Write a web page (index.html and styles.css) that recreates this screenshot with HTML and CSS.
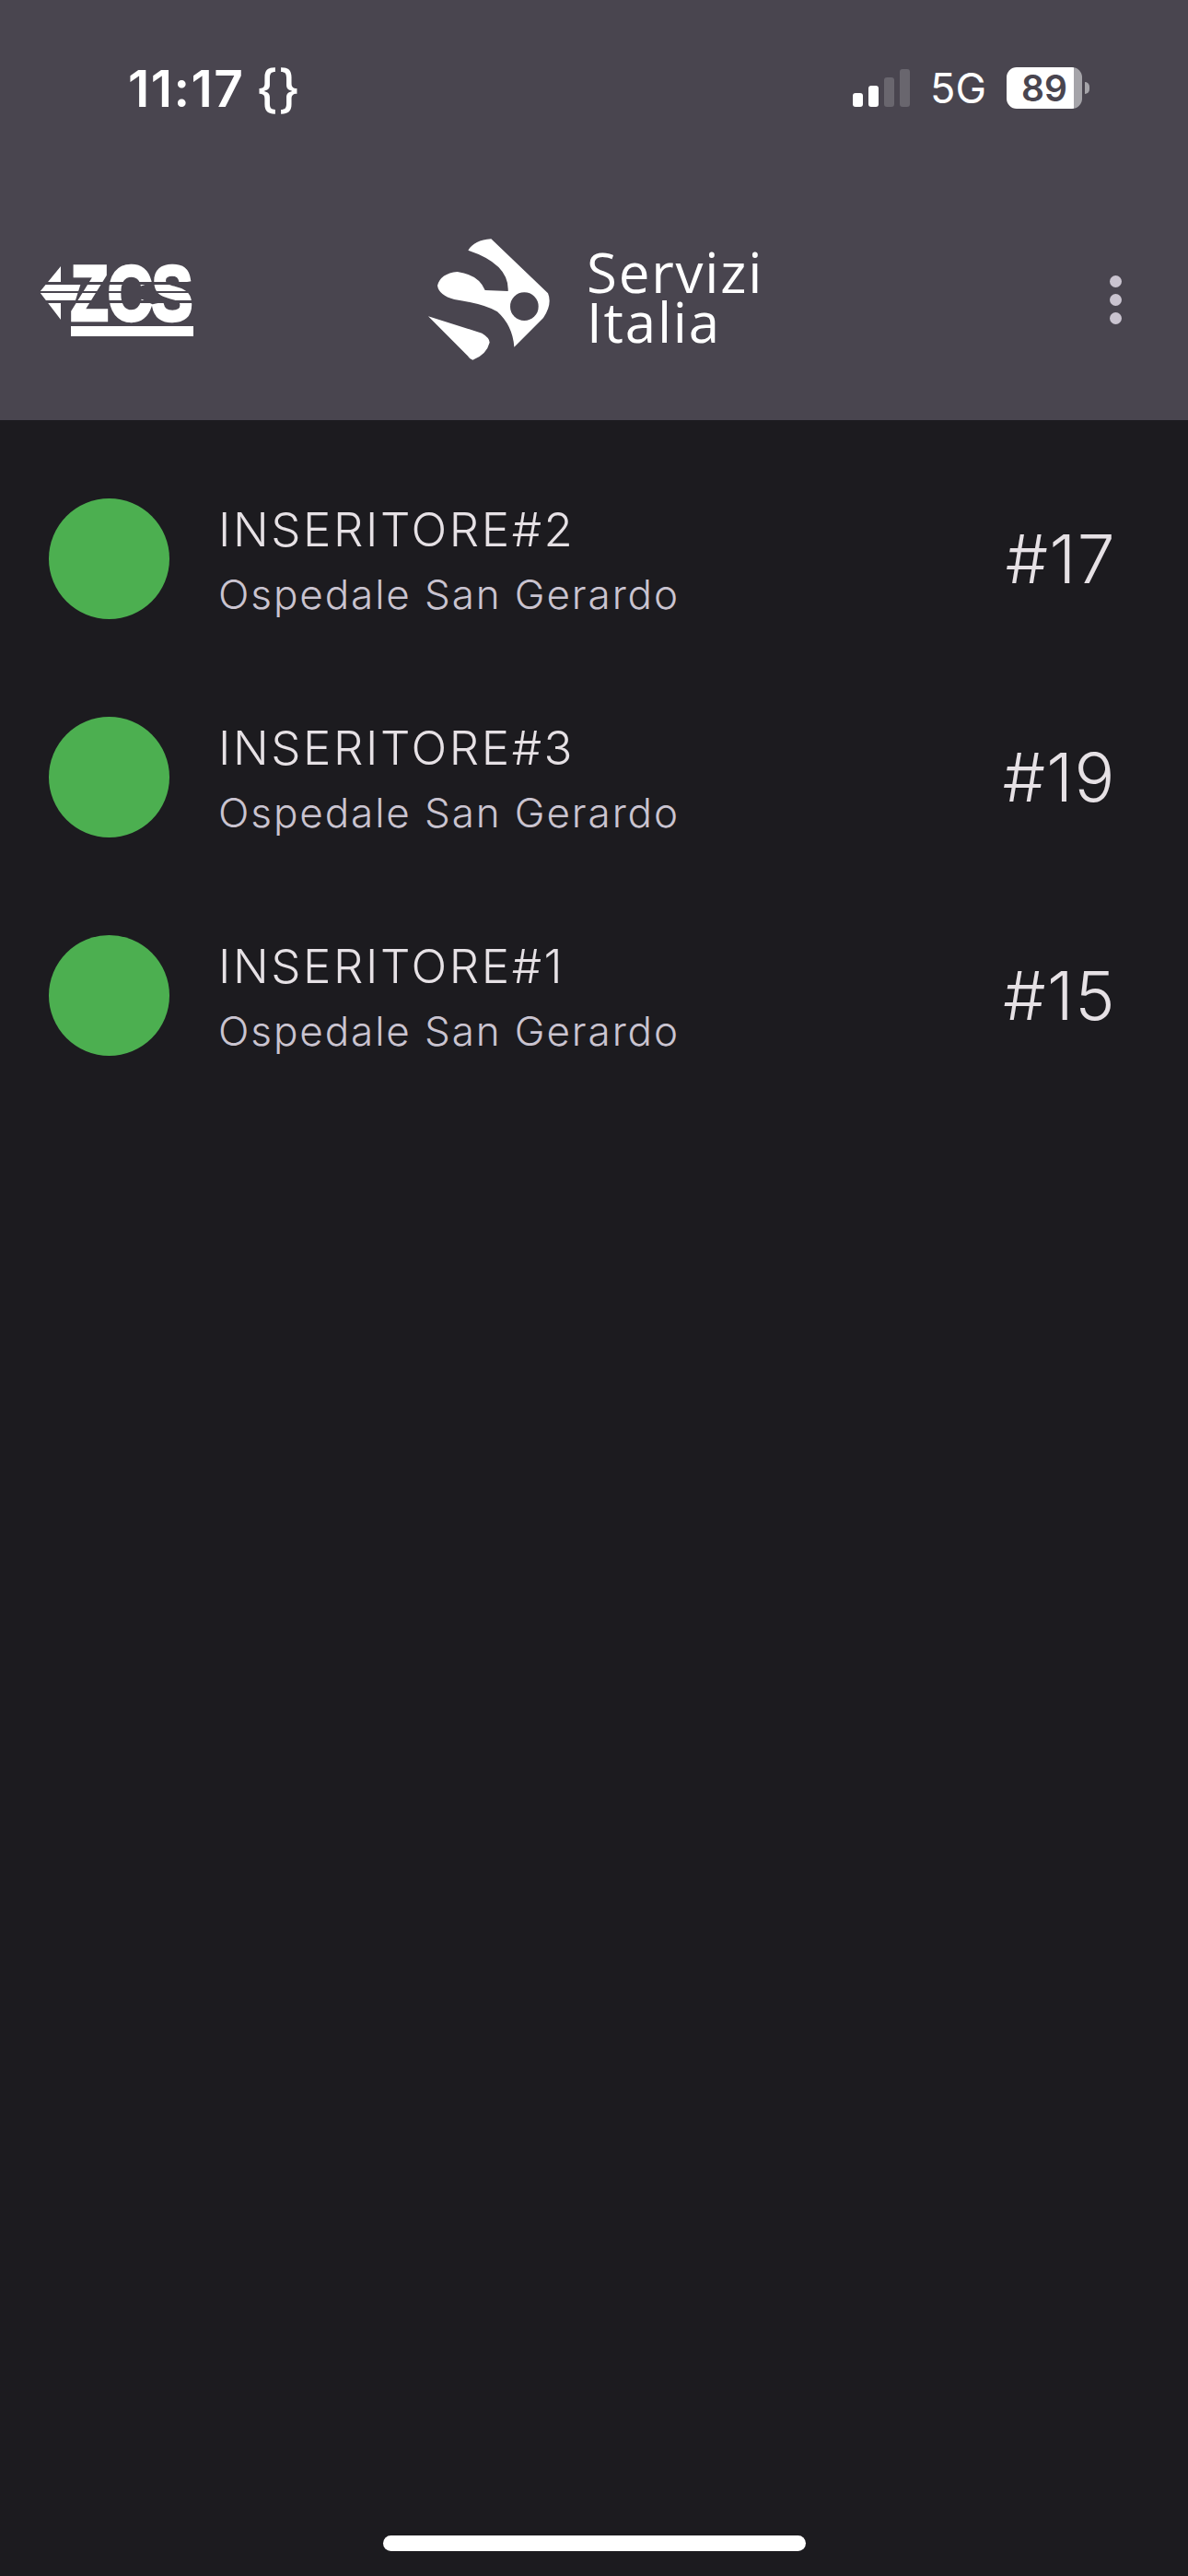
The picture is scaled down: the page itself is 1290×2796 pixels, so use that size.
FILE: index.html
```html
<!doctype html>
<html lang="it">
<head>
  <meta charset="UTF-8">
  <title>Inseritori</title>
  <link rel="stylesheet" href="styles.css">
</head>
<body>
  <div class="app">
    <div class="top">
      <div class="status">
        <div class="clock">11:17 <span class="braces">{}</span></div>
        <div class="status-right">
          <div class="signal">
            <i class="b1"></i><i class="b2"></i><i class="b3"></i><i class="b4"></i>
          </div>
          <span class="net">5G</span>
          <div class="battery"><span class="batt-level">89</span></div>
          <i class="batt-nub"></i>
        </div>
      </div>
      <div class="appbar">
        <svg class="logo-zcs" viewBox="0 -16 171 94" width="171" height="94">
          <polygon points="23,2 23,20 45,20 38,42 23,42 23,60 0,30" fill="#fff"/>
          <text class="zcs-text" transform="translate(34,60) scale(1,1.26)">ZCS</text>
          <rect x="0" y="19" width="167" height="3" fill="#49454f"/>
          <rect x="0" y="29" width="167" height="2" fill="#49454f"/>
          <rect x="0" y="39" width="167" height="3" fill="#49454f"/>
          <rect x="34" y="67" width="133" height="11" fill="#fff"/>
        </svg>
        <div class="brand">
          <svg class="brand-mark" viewBox="90 75 450 420" width="150" height="140">
            <path fill="#fff" d="M235 125 Q255 92 310 88 L495 265 Q510 300 480 345 L385 440 Q380 370 330 325 Q290 300 190 285 Q140 272 135 240 Q145 200 200 195 Q270 205 290 255 L365 258 Q370 170 235 125Z"/>
            <circle cx="418" cy="308" r="46" fill="#49454f"/>
            <path fill="#fff" d="M105 340 L280 395 Q305 410 305 425 Q295 465 250 482 Q240 480 235 470Z"/>
          </svg>
          <div class="brand-name"><div>Servizi</div><div>Italia</div></div>
        </div>
        <div class="menu-dots"><i></i><i></i><i></i></div>
      </div>
    </div>

    <div class="list">
      <div class="row">
        <div class="dot"></div>
        <div class="info">
          <div class="name">INSERITORE#2</div>
          <div class="place">Ospedale San Gerardo</div>
        </div>
        <div class="num">#17</div>
      </div>
      <div class="row">
        <div class="dot"></div>
        <div class="info">
          <div class="name">INSERITORE#3</div>
          <div class="place">Ospedale San Gerardo</div>
        </div>
        <div class="num">#19</div>
      </div>
      <div class="row">
        <div class="dot"></div>
        <div class="info">
          <div class="name">INSERITORE#1</div>
          <div class="place">Ospedale San Gerardo</div>
        </div>
        <div class="num">#15</div>
      </div>
    </div>

    <div class="home-wrap"><div class="home-bar"></div></div>
  </div>
</body>
</html>
```

FILE: styles.css
```css
html,body{margin:0;padding:0;background:#1c1b1f;}
.app{width:1290px;height:2796px;display:flex;flex-direction:column;font-family:Inter,"Liberation Sans",sans-serif;overflow:hidden;}

.top{background:#49454f;height:456px;}

/* status bar */
.status{height:190px;display:flex;justify-content:space-between;padding:73px 107px 0 139px;box-sizing:border-box;}
.clock{font-size:55px;line-height:46px;font-weight:600;color:#fff;letter-spacing:1.5px;white-space:nowrap;}
.braces{font-weight:500;margin-left:-3px;letter-spacing:0;}
.status-right{display:flex;align-items:flex-start;height:46px;}
.signal{display:flex;align-items:flex-end;gap:6px;height:41px;margin-top:2px;margin-right:22px;}
.signal i{display:block;width:11px;border-radius:3px;background:#fff;}
.signal .b1{height:15px;}
.signal .b2{height:23px;}
.signal .b3{height:32px;background:#69666e;}
.signal .b4{height:41px;background:#69666e;}
.net{font-size:45px;line-height:46px;color:#fff;margin-right:22px;}
.battery{width:82px;height:45px;border-radius:11px;box-sizing:border-box;background:linear-gradient(to right,#fff 73px,#a5a4a9 73px);text-align:left;}
.batt-level{display:block;padding-left:16px;font-size:39px;line-height:45px;font-weight:600;color:#49454f;}
.batt-nub{display:block;width:5px;height:13px;margin:16px 0 0 3px;background:#a5a4a9;border-radius:0 6px 6px 0;}

/* app bar */
.appbar{height:266px;display:flex;align-items:flex-start;padding:0 72px 0 43px;box-sizing:border-box;}
.logo-zcs{margin-top:81px;display:block;flex:none;}
.zcs-text{font-family:"Liberation Sans",sans-serif;font-weight:700;font-size:66px;fill:#fff;stroke:#fff;stroke-width:3.5px;}
.brand{display:flex;align-items:flex-start;margin-top:65px;margin-left:246px;}
.brand-mark{display:block;flex:none;}
.brand-name{margin-left:27px;margin-top:13px;font-family:"Open Sans",sans-serif;font-size:60px;font-weight:500;line-height:54px;letter-spacing:1.8px;color:#fff;}
.brand-name div{height:54px;}
.menu-dots{display:flex;flex-direction:column;gap:7px;margin-top:109px;margin-left:auto;}
.menu-dots i{display:block;width:13px;height:13px;border-radius:50%;background:#cac4d0;}

/* list */
.list{padding-top:32px;flex:1;}
.row{height:237px;display:flex;align-items:center;padding:0 78px 0 53px;}
.dot{width:131px;height:131px;border-radius:50%;background:#4caf50;flex:none;}
.info{flex:1;margin-left:53px;padding-top:6px;}
.name{font-size:51px;line-height:60px;font-weight:350;letter-spacing:2.6px;color:#e6e1e5;}
.place{font-size:44px;line-height:60px;font-weight:350;letter-spacing:1.9px;color:#cac4d0;margin-top:10px;}
.num{font-size:73px;line-height:80px;font-weight:350;letter-spacing:1.5px;color:#e6e1e5;}

.home-wrap{height:44px;display:flex;justify-content:center;}
.home-bar{width:459px;height:17px;border-radius:9px;background:#fff;}
```
